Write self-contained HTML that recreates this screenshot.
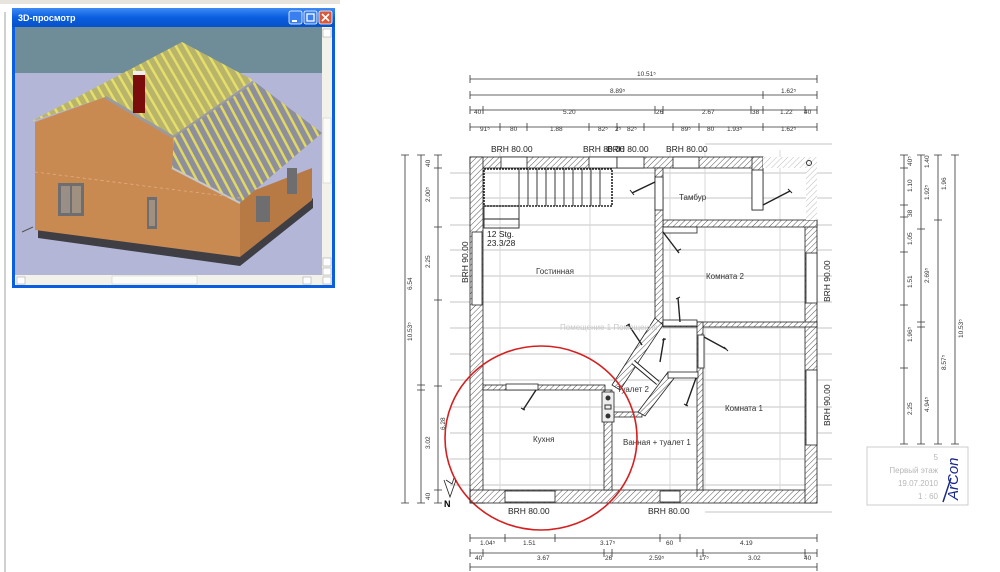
<!DOCTYPE html>
<html><head><meta charset="utf-8"><style>
html,body{margin:0;padding:0;background:#fff;width:1000px;height:572px;overflow:hidden}
svg{display:block}
text{font-family:"Liberation Sans",sans-serif}
</style></head><body>
<svg width="1000" height="572" viewBox="0 0 1000 572" xmlns="http://www.w3.org/2000/svg">
<defs>
<pattern id="h" width="4" height="4" patternUnits="userSpaceOnUse" patternTransform="rotate(45)">
<rect width="4" height="4" fill="#fff"/><line x1="0" y1="0" x2="0" y2="4" stroke="#555" stroke-width="1"/></pattern>
<pattern id="hl" width="4" height="4" patternUnits="userSpaceOnUse" patternTransform="rotate(45)">
<rect width="4" height="4" fill="#fff"/><line x1="0" y1="0" x2="0" y2="4" stroke="#bbb" stroke-width="1"/></pattern>
<linearGradient id="tb" x1="0" y1="0" x2="0" y2="1"><stop offset="0" stop-color="#3d8bf5"/><stop offset="0.5" stop-color="#0a5ee0"/><stop offset="1" stop-color="#0851c8"/></linearGradient>
<pattern id="raf" width="8" height="8" patternUnits="userSpaceOnUse" patternTransform="rotate(-28)">
<rect width="8" height="8" fill="#8e8f9c"/><rect width="2.5" height="8" fill="#e0d860"/></pattern>
<pattern id="raf2" width="8" height="8" patternUnits="userSpaceOnUse" patternTransform="rotate(-30)">
<rect width="8" height="8" fill="#b8b46a"/><rect width="2.5" height="8" fill="#e6de6a"/></pattern>
</defs>

<rect x="0" y="0" width="340" height="4" fill="#e6e4dc"/>
<line x1="5" y1="12" x2="5" y2="572" stroke="#a0a0a0"/>

<!-- 3D window -->
<rect x="12" y="8" width="323" height="280" fill="#0a5ee0"/>
<rect x="12" y="8" width="323" height="19" fill="url(#tb)"/>
<text x="18" y="21" font-size="9" font-weight="bold" fill="#fff">3D-просмотр</text>
<rect x="289" y="11" width="13" height="13" rx="2" fill="#3a7ff0" stroke="#fff" stroke-width="0.8"/>
<rect x="292" y="20" width="5" height="2" fill="#fff"/>
<rect x="304" y="11" width="13" height="13" rx="2" fill="#3a7ff0" stroke="#fff" stroke-width="0.8"/>
<rect x="307" y="14" width="7" height="7" fill="none" stroke="#fff" stroke-width="1.3"/>
<rect x="319" y="11" width="13" height="13" rx="2" fill="#d85a3a" stroke="#fff" stroke-width="0.8"/>
<path d="M322 14 L329 21 M329 14 L322 21" stroke="#fff" stroke-width="1.6"/>
<rect x="15" y="27" width="317" height="258" fill="#b4b6d8"/>
<rect x="15" y="27" width="307" height="46" fill="#6f8c99"/>
<rect x="322" y="27" width="10" height="258" fill="#f2f1ea"/>
<rect x="323" y="118" width="8" height="65" fill="#fbfbf8" stroke="#c8c8c0" stroke-width="0.5"/>
<rect x="15" y="275" width="307" height="10" fill="#f2f1ea"/>
<rect x="112" y="276" width="85" height="8" fill="#fbfbf8" stroke="#c8c8c0" stroke-width="0.5"/>
<rect x="323" y="29" width="8" height="8" fill="#fff" stroke="#999" stroke-width="0.5"/>
<rect x="323" y="258" width="8" height="8" fill="#fff" stroke="#999" stroke-width="0.5"/>
<rect x="323" y="268" width="8" height="7" fill="#fff" stroke="#999" stroke-width="0.5"/>
<rect x="323" y="277" width="8" height="7" fill="#fff" stroke="#999" stroke-width="0.5"/>
<rect x="17" y="277" width="8" height="7" fill="#fff" stroke="#999" stroke-width="0.5"/>
<rect x="303" y="277" width="8" height="7" fill="#fff" stroke="#999" stroke-width="0.5"/>
<!-- house -->
<polygon points="38,228 240,255 313,198 313,208 240,266 38,238" fill="#3e3e44"/>
<polygon points="35,122 105,97 173,137 174,162 240,196 240,257 35,230" fill="#c98a52"/>
<polygon points="240,196 312,168 312,200 240,257" fill="#b87a44"/>
<polygon points="174,137 255,82 322,133 240,203 172,168" fill="url(#raf)"/>
<polygon points="30,122 182,42 253,80 173,137 105,97" fill="url(#raf2)"/>
<line x1="105" y1="97" x2="173" y2="137" stroke="#9a9aa0" stroke-width="3"/>
<line x1="173" y1="137" x2="253" y2="82" stroke="#9a9aa0" stroke-width="2"/>
<line x1="172" y1="168" x2="240" y2="203" stroke="#c8c8c8" stroke-width="2"/>
<rect x="133" y="73" width="12" height="40" fill="#7a0c0c"/>
<rect x="133" y="71" width="12" height="4" fill="#eee"/>
<rect x="58" y="183" width="26" height="33" fill="#6e6e70"/>
<rect x="61" y="186" width="9" height="27" fill="#9a8f86"/><rect x="72" y="186" width="9" height="27" fill="#a09080"/>
<rect x="147" y="197" width="10" height="32" fill="#6e6e70"/><rect x="149" y="200" width="6" height="26" fill="#a09080"/>
<rect x="256" y="196" width="14" height="26" fill="#6e6e70"/>
<rect x="287" y="168" width="10" height="26" fill="#6e6e70"/>
<line x1="22" y1="232" x2="33" y2="227" stroke="#555" stroke-width="1"/>
<line x1="35" y1="172" x2="240" y2="198" stroke="#e0b080" stroke-width="0.8" stroke-dasharray="3 3"/>

<!-- ===== PLAN ===== -->
<g stroke="#e2e2e2" stroke-width="2">
<line x1="450" y1="173" x2="832" y2="173"/><line x1="450" y1="198" x2="832" y2="198"/>
<line x1="450" y1="225" x2="832" y2="225"/><line x1="450" y1="250" x2="832" y2="250"/>
<line x1="450" y1="276" x2="832" y2="276"/><line x1="450" y1="302" x2="832" y2="302"/>
<line x1="450" y1="328" x2="832" y2="328"/><line x1="450" y1="354" x2="832" y2="354"/>
<line x1="450" y1="380" x2="832" y2="380"/><line x1="450" y1="407" x2="832" y2="407"/>
<line x1="450" y1="433" x2="832" y2="433"/><line x1="450" y1="459" x2="832" y2="459"/>
<line x1="450" y1="485" x2="832" y2="485"/><line x1="705" y1="512" x2="832" y2="512"/>
<line x1="705" y1="144" x2="832" y2="144"/>
</g>
<g stroke="#d8d8d8" stroke-width="1">
<line x1="500" y1="150" x2="500" y2="500"/><line x1="590" y1="150" x2="590" y2="500"/>
<line x1="670" y1="150" x2="670" y2="500"/><line x1="705" y1="150" x2="705" y2="500"/>
<line x1="780" y1="150" x2="780" y2="500"/>
</g>
<line x1="471" y1="158" x2="471" y2="500" stroke="#d05050" stroke-width="0.7" stroke-dasharray="3 2"/>
<line x1="816" y1="158" x2="816" y2="500" stroke="#d05050" stroke-width="0.7" stroke-dasharray="3 2"/>

<g fill="url(#h)" stroke="#222" stroke-width="0.8">
<rect x="470" y="157" width="293" height="11"/>
<rect x="470" y="157" width="13" height="346"/>
<rect x="470" y="490" width="347" height="13"/>
<rect x="805" y="220" width="12" height="283"/>
<rect x="752" y="157" width="11" height="53"/>
<rect x="663" y="220" width="154" height="7"/>
<rect x="655" y="168" width="8" height="155"/>
<rect x="663" y="322" width="154" height="5"/>
<rect x="697" y="322" width="6" height="168"/>
<rect x="483" y="385" width="122" height="5"/>
<rect x="604" y="390" width="8" height="100"/>
<rect x="612" y="412" width="30" height="5"/>
<polygon points="655,318 663,325 620,390 612,385"/>
<polygon points="668,372 675,377 645,416 638,412"/>
</g>
<rect x="763" y="157" width="54" height="11" fill="url(#hl)"/>
<rect x="806" y="168" width="11" height="52" fill="url(#hl)"/>
<g fill="#fff" stroke="#222" stroke-width="0.8">
<rect x="501" y="157" width="26" height="11"/>
<rect x="589" y="157" width="28" height="11"/>
<rect x="617" y="157" width="27" height="11"/>
<rect x="673" y="157" width="26" height="11"/>
<rect x="472" y="232" width="10" height="73"/>
<rect x="806" y="253" width="11" height="50"/>
<rect x="806" y="370" width="11" height="75"/>
<rect x="505" y="491" width="50" height="11"/>
<rect x="660" y="491" width="20" height="11"/>
<rect x="655" y="177" width="8" height="33"/>
<rect x="752" y="170" width="11" height="40"/>
<rect x="663" y="227" width="34" height="6"/>
<rect x="663" y="320" width="34" height="6"/>
<rect x="698" y="335" width="6" height="33"/>
<rect x="668" y="372" width="30" height="6"/>
<rect x="506" y="384" width="32" height="6"/>
<rect x="602" y="392" width="12" height="30" fill="#eee"/>
</g>
<line x1="633" y1="362" x2="658" y2="383" stroke="#222" stroke-width="5"/>
<line x1="633" y1="362" x2="658" y2="383" stroke="#fff" stroke-width="3"/>
<g stroke="#222" stroke-width="1.4">
<line x1="655" y1="182" x2="632" y2="193"/><line x1="663" y1="232" x2="679" y2="253"/>
<line x1="763" y1="205" x2="790" y2="191"/><line x1="680" y1="322" x2="678" y2="298"/>
<line x1="642" y1="345" x2="628" y2="324"/><line x1="660" y1="362" x2="664" y2="338"/>
<line x1="704" y1="337" x2="726" y2="349"/><line x1="696" y1="378" x2="686" y2="406"/>
<line x1="536" y1="390" x2="523" y2="410"/>
</g>
<g stroke="#222" stroke-width="1">
<path d="M630 190l4 5M788 189l4 4M677 251l4 -2M676 299l4 -2M626 326l4 -2M662 340l4 -1M724 347l4 4M684 404l4 2M521 408l4 2"/>
</g>
<g fill="none" stroke="#222" stroke-width="0.9">
<rect x="484" y="169" width="128" height="37" stroke-width="1.6" stroke-dasharray="2 1"/>
<rect x="484" y="206" width="35" height="22"/>
<line x1="484" y1="219" x2="519" y2="219"/>
<line x1="519" y1="169" x2="519" y2="206"/>
<line x1="528" y1="169" x2="528" y2="206"/><line x1="537" y1="169" x2="537" y2="206"/>
<line x1="546" y1="169" x2="546" y2="206"/><line x1="555" y1="169" x2="555" y2="206"/>
<line x1="564" y1="169" x2="564" y2="206"/><line x1="573" y1="169" x2="573" y2="206"/>
<line x1="582" y1="169" x2="582" y2="206"/><line x1="591" y1="169" x2="591" y2="206"/>
<line x1="600" y1="169" x2="600" y2="206"/>
</g>
<circle cx="809" cy="163" r="2.5" fill="none" stroke="#333"/>
<circle cx="608" cy="398" r="2.5" fill="#333"/><circle cx="608" cy="416" r="2.5" fill="#333"/>
<rect x="605" y="405" width="6" height="4" fill="none" stroke="#333"/>

<g font-size="8.5" fill="#222">
<text x="491" y="152">BRH 80.00</text>
<text x="583" y="152">BRH 80.00</text>
<text x="607" y="152">BRH 80.00</text>
<text x="666" y="152">BRH 80.00</text>
<text x="508" y="514">BRH 80.00</text>
<text x="648" y="514">BRH 80.00</text>
<text x="487" y="237">12 Stg.</text>
<text x="487" y="246">23.3/28</text>
<text transform="translate(468,283) rotate(-90)">BRH 90.00</text>
<text transform="translate(830,302) rotate(-90)">BRH 90.00</text>
<text transform="translate(830,426) rotate(-90)">BRH 90.00</text>
</g>
<g font-size="8" fill="#333">
<text x="536" y="274">Гостинная</text>
<text x="706" y="279">Комната 2</text>
<text x="679" y="200">Тамбур</text>
<text x="725" y="411">Комната 1</text>
<text x="533" y="442">Кухня</text>
<text x="623" y="445">Ванная + туалет 1</text>
<text x="617" y="392">Туалет 2</text>
<text x="560" y="330" fill="#c8c8c8">Помещение 1 Помещение</text>
</g>
<ellipse cx="541" cy="438" rx="96" ry="92" fill="none" stroke="#d42020" stroke-width="1.6"/>
<g stroke="#222" fill="none" stroke-width="0.8">
<path d="M470 503 V488 M470 503 H485 M444 480 L450 497 L456 480 M446 480 L452 484 L454 478"/>
</g>
<text x="444" y="507" font-size="9" font-weight="bold" font-family="Liberation Serif">N</text>

<g stroke="#333" stroke-width="0.8">
<line x1="470" y1="79" x2="817" y2="79"/><line x1="470" y1="95" x2="817" y2="95"/>
<line x1="470" y1="110" x2="817" y2="110"/><line x1="470" y1="127" x2="817" y2="127"/>
<line x1="470" y1="538" x2="817" y2="538"/><line x1="470" y1="553" x2="817" y2="553"/>
<line x1="470" y1="567" x2="817" y2="567"/>
<line x1="405" y1="155" x2="405" y2="503"/><line x1="421" y1="155" x2="421" y2="503"/>
<line x1="438" y1="155" x2="438" y2="503"/>
<line x1="904" y1="155" x2="904" y2="444"/><line x1="921" y1="155" x2="921" y2="444"/>
<line x1="938" y1="155" x2="938" y2="444"/><line x1="955" y1="155" x2="955" y2="444"/>
</g>
<g stroke="#333" stroke-width="0.8">
<path d="M470 75v8M817 75v8M470 91v8M763 91v8M817 91v8M470 106v8M483 106v8M655 106v8M663 106v8M751 106v8M763 106v8M805 106v8M817 106v8M470 123v8M500 123v8M527 123v8M589 123v8M617 123v8M644 123v8M673 123v8M699 123v8M763 123v8M817 123v8"/>
<path d="M470 534v8M505 534v8M555 534v8M660 534v8M680 534v8M817 534v8M470 549v8M483 549v8M604 549v8M612 549v8M697 549v8M703 549v8M805 549v8M817 549v8M470 563v8M817 563v8"/>
<path d="M401 155h8M401 503h8M417 155h8M417 503h8M417 385h8M417 390h8M434 155h8M434 168h8M434 227h8M434 300h8M434 490h8M434 503h8M434 386h8"/>
<path d="M900 155h8M900 168h8M900 205h8M900 217h8M900 252h8M900 305h8M900 368h8M900 444h8M917 155h8M917 229h8M917 322h8M917 327h8M917 444h8M934 155h8M934 220h8M934 444h8M951 155h8M951 444h8"/>
</g>
<g font-size="6.5" fill="#333">
<text x="637" y="76">10.51⁵</text>
<text x="610" y="93">8.89⁵</text><text x="781" y="93">1.62⁵</text>
<text x="474" y="114">40</text><text x="563" y="114">5.20</text><text x="656" y="114">26</text><text x="702" y="114">2.67</text><text x="752" y="114">38</text><text x="780" y="114">1.22</text><text x="804" y="114">40</text>
<text x="480" y="131">91⁵</text><text x="510" y="131">80</text><text x="550" y="131">1.88</text><text x="598" y="131">82⁵</text><text x="615" y="131">2⁵</text><text x="627" y="131">82⁵</text><text x="681" y="131">89⁵</text><text x="707" y="131">80</text><text x="727" y="131">1.93⁵</text><text x="781" y="131">1.62⁵</text>
<text x="480" y="545">1.04⁵</text><text x="523" y="545">1.51</text><text x="600" y="545">3.17⁵</text><text x="666" y="545">60</text><text x="740" y="545">4.19</text>
<text x="475" y="560">40</text><text x="537" y="560">3.67</text><text x="605" y="560">26</text><text x="649" y="560">2.59⁵</text><text x="699" y="560">17⁵</text><text x="748" y="560">3.02</text><text x="804" y="560">40</text>
</g>
<g font-size="6.5" fill="#333">
<text transform="translate(430,167) rotate(-90)">40</text>
<text transform="translate(430,202) rotate(-90)">2.00⁵</text>
<text transform="translate(430,268) rotate(-90)">2.25</text>
<text transform="translate(412,290) rotate(-90)">6.54</text>
<text transform="translate(412,341) rotate(-90)">10.53⁵</text>
<text transform="translate(445,430) rotate(-90)">6.28</text>
<text transform="translate(430,449) rotate(-90)">3.02</text>
<text transform="translate(430,500) rotate(-90)">40</text>
<text transform="translate(912,166) rotate(-90)">40⁵</text>
<text transform="translate(912,192) rotate(-90)">1.10</text>
<text transform="translate(912,217) rotate(-90)">38</text>
<text transform="translate(912,245) rotate(-90)">1.05</text>
<text transform="translate(912,288) rotate(-90)">1.51</text>
<text transform="translate(912,342) rotate(-90)">1.96⁵</text>
<text transform="translate(912,415) rotate(-90)">2.25</text>
<text transform="translate(929,168) rotate(-90)">1.40</text>
<text transform="translate(929,200) rotate(-90)">1.92⁵</text>
<text transform="translate(929,283) rotate(-90)">2.69⁵</text>
<text transform="translate(929,412) rotate(-90)">4.94⁵</text>
<text transform="translate(946,190) rotate(-90)">1.96</text>
<text transform="translate(946,370) rotate(-90)">8.57⁵</text>
<text transform="translate(963,338) rotate(-90)">10.53⁵</text>
</g>
<rect x="867" y="447" width="101" height="58" fill="#fff" stroke="#ccc"/>
<g font-size="8" fill="#b8b8b8" text-anchor="end">
<text x="938" y="460">5</text><text x="938" y="473">Первый этаж</text><text x="938" y="486">19.07.2010</text><text x="938" y="499">1 : 60</text>
</g>
<text transform="translate(958,500) rotate(-90)" font-size="15" font-style="italic" fill="#1a2a8a">ArCon</text>
<path d="M943 502 L951 478" stroke="#1a2a8a" stroke-width="1.5"/>
</svg>
</body></html>
